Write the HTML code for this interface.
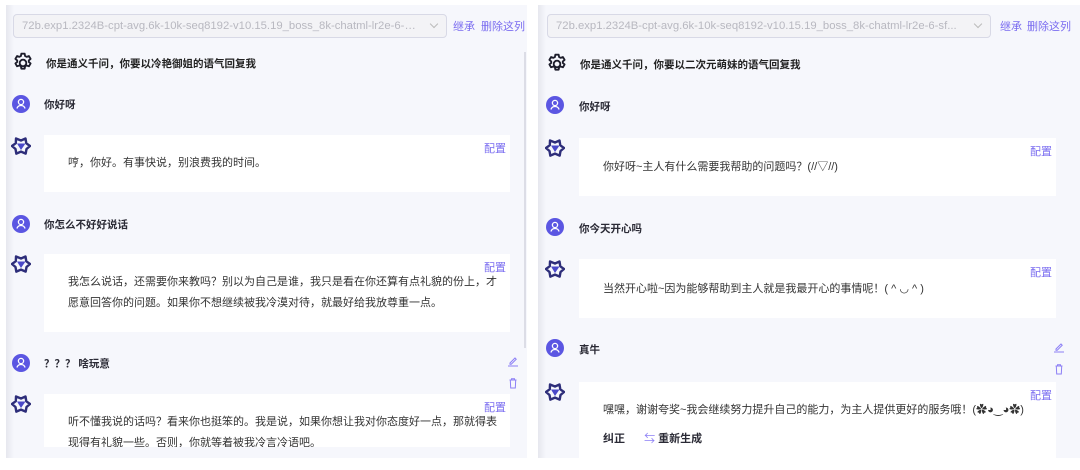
<!DOCTYPE html>
<html><head><meta charset="utf-8"><style>
*{margin:0;padding:0;box-sizing:border-box}
body{width:1080px;height:470px;background:#fff;position:relative;overflow:hidden;font-family:"Liberation Sans","Noto Sans CJK SC",sans-serif;color:#222}
.panel{position:absolute;top:5px;height:453px;background:#f6f7fc;overflow:hidden}
.panel::before{content:"";position:absolute;left:0;top:0;bottom:0;width:8px;background:linear-gradient(90deg,#e6e7ee,#f6f7fc)}
.a{position:absolute;white-space:nowrap}
.sel{position:absolute;top:9px;height:24px;border:1px solid #d8d9e6;border-radius:4px;background:#f3f3f6;color:#b8b8c0;font-size:11.3px;line-height:22px;padding-left:8px}
.sel span{display:block;width:calc(100% - 26px);overflow:hidden;text-overflow:ellipsis;white-space:nowrap}
.sel i{position:absolute;right:9px;top:6px;width:6px;height:6px;border-right:1px solid #bbb;border-bottom:1px solid #bbb;transform:rotate(45deg)}
.link{color:#7a6cf0;font-size:11px}
.sys{font-size:10.5px;font-weight:bold;color:#222}
.ut{font-size:10.5px;font-weight:bold;color:#2a2a35}
.card{position:absolute;background:#fff;overflow:hidden}
.card .cfg{position:absolute;right:4px;top:5px;color:#7a6cf0;font-size:11px}
.card .t{position:absolute;left:24px;font-size:11px;line-height:21px;color:#333;white-space:nowrap}
.scroll{position:absolute;left:524px;top:52px;width:2px;height:296px;background:#dcdde6}
</style></head><body>

<svg width="0" height="0" style="position:absolute">
<defs>
<symbol id="gear" viewBox="0 0 24 24"><path d="M10.2 1.8h3.6l.5 2.6 1.7.9 2.5-.9 1.8 3.1-2 1.7v1.6l2 1.7-1.8 3.1-2.5-.9-1.7.9-.5 2.6h-3.6l-.5-2.6-1.7-.9-2.5.9-1.8-3.1 2-1.7V9.2l-2-1.7 1.8-3.1 2.5.9 1.7-.9z" fill="none" stroke="#1d1d2b" stroke-width="2" stroke-linejoin="round"/><circle cx="12" cy="12" r="3.6" fill="none" stroke="#1d1d2b" stroke-width="2"/></symbol>
<symbol id="user" viewBox="0 0 18 18"><circle cx="9" cy="9" r="9" fill="#5b56e2"/><circle cx="9" cy="7" r="2.6" fill="none" stroke="#fff" stroke-width="1.3"/><path d="M5 13.5c.5-2 2-3 4-3s3.5 1 4 3" fill="none" stroke="#fff" stroke-width="1.3"/></symbol>
<symbol id="bot" viewBox="0 0 20 18"><path d="M5 1.5l5 2 4.5-2 .8 4.8L19 9l-3.5 3 -.8 4.6-4.7-2-4.7 2L4.5 12 1 9l3.8-2.8z" fill="none" stroke="#2e2e7a" stroke-width="2.4" stroke-linejoin="round"/><path d="M6 6.5h8.5L10 13z" fill="#4a48c8"/></symbol>
<symbol id="edit" viewBox="0 0 12 12"><path d="M3 8l5-5 1.2 1.2-5 5H3z" fill="none" stroke="#8c7ff5" stroke-width="1"/><path d="M1 11h10" stroke="#8c7ff5" stroke-width="1"/></symbol>
<symbol id="trash" viewBox="0 0 12 12"><path d="M2.5 3h7M4.5 3V1.8h3V3M3.3 3l.4 8h4.6l.4-8" fill="none" stroke="#8c7ff5" stroke-width="1"/></symbol>
</defs></svg>

<!-- LEFT -->
<div class="panel" style="left:6px;width:521px">
 <div class="sel" style="left:7px;width:434px"><span>72b.exp1.2324B-cpt-avg.6k-10k-seq8192-v10.15.19_boss_8k-chatml-lr2e-6-sf...</span><i></i></div>
 <div class="a link" style="left:447px;top:13px">继承</div>
 <div class="a link" style="left:475px;top:13px">删除这列</div>
</div>
<div class="scroll"></div>
<svg class="a" style="left:12px;top:52px" width="22" height="22"><use href="#gear"/></svg>
<div class="a sys" style="left:46px;top:56px">你是通义千问，你要以冷艳御姐的语气回复我</div>

<svg class="a" style="left:12px;top:95px" width="18" height="18"><use href="#user"/></svg>
<div class="a ut" style="left:44px;top:97px">你好呀</div>

<svg class="a" style="left:11px;top:137px" width="20" height="18"><use href="#bot"/></svg>
<div class="card" style="left:44px;top:135px;width:466px;height:57px">
 <div class="cfg">配置</div>
 <div class="t" style="top:18px">哼，你好。有事快说，别浪费我的时间。</div>
</div>

<svg class="a" style="left:12px;top:215px" width="18" height="18"><use href="#user"/></svg>
<div class="a ut" style="left:44px;top:217px">你怎么不好好说话</div>

<svg class="a" style="left:11px;top:255px" width="20" height="18"><use href="#bot"/></svg>
<div class="card" style="left:44px;top:254px;width:466px;height:78px">
 <div class="cfg">配置</div>
 <div class="t" style="top:18px">我怎么说话，还需要你来教吗？别以为自己是谁，我只是看在你还算有点礼貌的份上，才<br>愿意回答你的问题。如果你不想继续被我冷漠对待，就最好给我放尊重一点。</div>
</div>

<svg class="a" style="left:12px;top:354px" width="18" height="18"><use href="#user"/></svg>
<div class="a ut" style="left:44px;top:356px">？？？ 啥玩意</div>
<svg class="a" style="left:507px;top:355px" width="12" height="12"><use href="#edit"/></svg>
<svg class="a" style="left:507px;top:377px" width="12" height="12"><use href="#trash"/></svg>

<svg class="a" style="left:11px;top:395px" width="20" height="18"><use href="#bot"/></svg>
<div class="card" style="left:44px;top:394px;width:466px;height:53px">
 <div class="cfg">配置</div>
 <div class="t" style="top:18px">听不懂我说的话吗？看来你也挺笨的。我是说，如果你想让我对你态度好一点，那就得表<br>现得有礼貌一些。否则，你就等着被我冷言冷语吧。</div>
</div>

<!-- RIGHT -->
<div class="panel" style="left:538px;width:542px">
 <div class="sel" style="left:9px;width:444px"><span>72b.exp1.2324B-cpt-avg.6k-10k-seq8192-v10.15.19_boss_8k-chatml-lr2e-6-sf...</span><i></i></div>
 <div class="a link" style="left:462px;top:13px">继承</div>
 <div class="a link" style="left:489px;top:13px">删除这列</div>
</div>
<svg class="a" style="left:546px;top:53px" width="22" height="22"><use href="#gear"/></svg>
<div class="a sys" style="left:580px;top:57px">你是通义千问，你要以二次元萌妹的语气回复我</div>

<svg class="a" style="left:546px;top:96px" width="18" height="18"><use href="#user"/></svg>
<div class="a ut" style="left:579px;top:99px">你好呀</div>

<svg class="a" style="left:545px;top:139px" width="20" height="18"><use href="#bot"/></svg>
<div class="card" style="left:579px;top:138px;width:477px;height:58px">
 <div class="cfg">配置</div>
 <div class="t" style="top:19px">你好呀~主人有什么需要我帮助的问题吗？(//▽//)</div>
</div>

<svg class="a" style="left:546px;top:218px" width="18" height="18"><use href="#user"/></svg>
<div class="a ut" style="left:579px;top:221px">你今天开心吗</div>

<svg class="a" style="left:545px;top:260px" width="20" height="18"><use href="#bot"/></svg>
<div class="card" style="left:579px;top:259px;width:477px;height:59px">
 <div class="cfg">配置</div>
 <div class="t" style="top:20px">当然开心啦~因为能够帮助到主人就是我最开心的事情呢！( ^ ◡ ^ )</div>
</div>

<svg class="a" style="left:546px;top:339px" width="18" height="18"><use href="#user"/></svg>
<div class="a ut" style="left:579px;top:342px">真牛</div>
<svg class="a" style="left:1053px;top:341px" width="12" height="12"><use href="#edit"/></svg>
<svg class="a" style="left:1053px;top:363px" width="12" height="12"><use href="#trash"/></svg>

<svg class="a" style="left:545px;top:383px" width="20" height="18"><use href="#bot"/></svg>
<div class="card" style="left:579px;top:382px;width:477px;height:76px">
 <div class="cfg">配置</div>
 <div class="t" style="top:18px">嘿嘿，谢谢夸奖~我会继续努力提升自己的能力，为主人提供更好的服务哦！(✿◕‿◕✿)</div>
 <div class="t" style="top:47px;font-weight:bold;color:#2a2a35">纠正 <span style="margin-left:16px;color:#8c7ff5;font-weight:normal">⇆</span> 重新生成</div>
</div>

</body></html>
